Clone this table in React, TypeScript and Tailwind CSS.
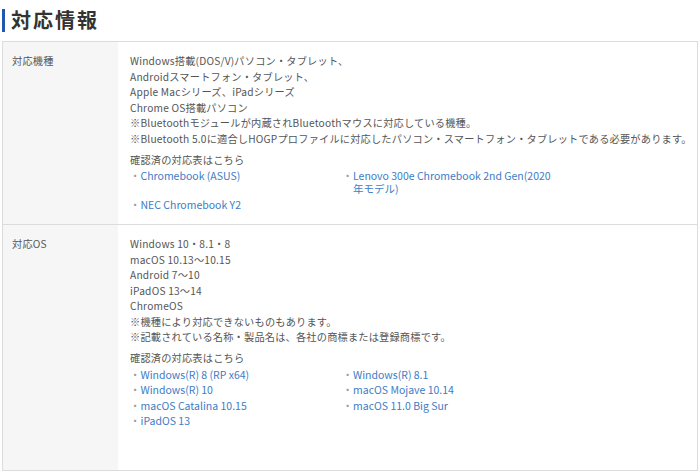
import type { ReactNode } from "react";

const deviceLinks: ReactNode[] = [
  "Chromebook (ASUS)",
  <>
    Lenovo 300e Chromebook 2nd Gen(2020
    <br />
    年モデル)
  </>,
  "NEC Chromebook Y2",
];

const osLinks: ReactNode[] = [
  "Windows(R) 8 (RP x64)",
  "Windows(R) 8.1",
  "Windows(R) 10",
  "macOS Mojave 10.14",
  "macOS Catalina 10.15",
  "macOS 11.0 Big Sur",
  "iPadOS 13",
];

function LinkList({ items }: { items: ReactNode[] }) {
  return (
    <div>
      <p className="mt-[5.5px]">確認済の対応表はこちら</p>
      <ul className="grid grid-cols-[212.5px_212.5px] mt-[1px]">
        {items.map((item, i) => (
          <li key={i} className="flex py-[1.25px] leading-[13px]">
            <span className="w-[10.5px] shrink-0 text-[#999]">・</span>
            <a href="#" className="text-[#3d7cc6] text-[10.5px] tracking-normal">
              {item}
            </a>
          </li>
        ))}
      </ul>
    </div>
  );
}

function Row({
  label,
  children,
  className = "",
}: {
  label: string;
  children: ReactNode;
  className?: string;
}) {
  return (
    <div className="flex border-b border-[#dcdcdc]">
      <div className="w-[115px] shrink-0 bg-[#f6f6f6] pl-[9px] pt-[11px]">{label}</div>
      <div className={`flex-1 pl-[12px] pr-[2px] pt-[11px] ${className}`}>{children}</div>
    </div>
  );
}

export default function App() {
  return (
    <div
      className="bg-white w-[700px] h-[471px] overflow-hidden px-[2px]"
      style={{ fontFamily: '"Noto Sans CJK JP", "Noto Sans", sans-serif' }}
    >
      <div className="h-[41px] flex items-center">
        <div className="flex items-center h-[23px] border-l-[3px] border-[#2356b3] pl-[6px] -mt-[1px]">
          <h1 className="text-[20px] font-bold tracking-[2px] text-[#333] leading-none">対応情報</h1>
        </div>
      </div>

      <div className="border-x border-t border-[#dcdcdc] text-[10.2px] leading-[15.5px] tracking-[0.02em] text-[#555]">
        <Row label="対応機種" className="pb-[12px]">
          <p>Windows搭載(DOS/V)パソコン・タブレット、</p>
          <p>Androidスマートフォン・タブレット、</p>
          <p>Apple Macシリーズ、iPadシリーズ</p>
          <p>Chrome OS搭載パソコン</p>
          <p>※Bluetoothモジュールが内蔵されBluetoothマウスに対応している機種。</p>
          <p>※Bluetooth 5.0に適合しHOGPプロファイルに対応したパソコン・スマートフォン・タブレットである必要があります。</p>
          <LinkList items={deviceLinks} />
        </Row>
        <Row label="対応OS" className="pb-[41px]">
          <p>Windows 10・8.1・8</p>
          <p>macOS 10.13～10.15</p>
          <p>Android 7～10</p>
          <p>iPadOS 13～14</p>
          <p>ChromeOS</p>
          <p>※機種により対応できないものもあります。</p>
          <p>※記載されている名称・製品名は、各社の商標または登録商標です。</p>
          <LinkList items={osLinks} />
        </Row>
      </div>
    </div>
  );
}
